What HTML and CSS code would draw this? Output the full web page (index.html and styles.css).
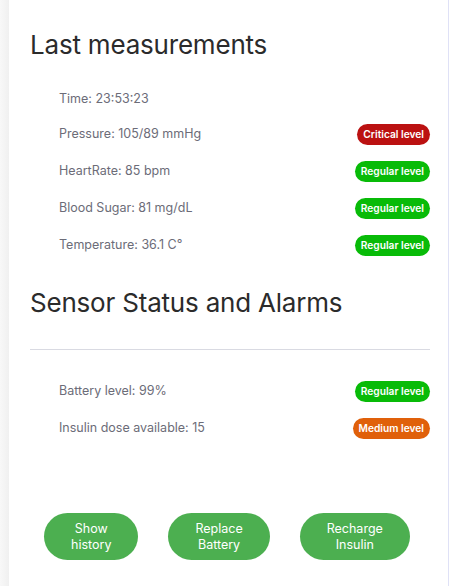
FILE: index.html
```html
<!DOCTYPE html>
<html>
<head>
<meta charset="utf-8">
<link rel="stylesheet" href="styles.css">
</head>
<body>
<div class="page">
  <div class="shade"></div>
  <main class="card">
    <h2 class="title">Last measurements</h2>
    <ul class="list">
      <li class="row row-plain"><span class="label">Time: 23:53:23</span></li>
      <li class="row"><span class="label">Pressure: 105/89 mmHg</span><span class="badge critical">Critical level</span></li>
      <li class="row"><span class="label">HeartRate: 85 bpm</span><span class="badge regular">Regular level</span></li>
      <li class="row"><span class="label">Blood Sugar: 81 mg/dL</span><span class="badge regular">Regular level</span></li>
      <li class="row"><span class="label">Temperature: 36.1 C°</span><span class="badge regular">Regular level</span></li>
    </ul>
    <h2 class="title title-2">Sensor Status and Alarms</h2>
    <hr class="divider">
    <ul class="list list-2">
      <li class="row"><span class="label">Battery level: 99%</span><span class="badge regular">Regular level</span></li>
      <li class="row"><span class="label">Insulin dose available: 15</span><span class="badge medium">Medium level</span></li>
    </ul>
    <div class="actions">
      <button class="btn">Show<br>history</button>
      <button class="btn">Replace<br>Battery</button>
      <button class="btn">Recharge<br>Insulin</button>
    </div>
  </main>
</div>
</body>
</html>
```
FILE: styles.css
```css
html, body {
  margin: 0;
  padding: 0;
  background: #ffffff;
}
body {
  font-family: "Inter", "Lato", sans-serif;
}
.page {
  display: flex;
  height: 586px;
  overflow: hidden;
}
.shade {
  width: 9px;
  flex: none;
  background: linear-gradient(to right, #f8f8f8, #f0f0f0);
}
.card {
  width: 400px;
  flex: none;
  padding: 29px 18px 0 21px;
  border-right: 1px solid #dfe1f6;
  background: #fff;
}
.title {
  margin: 0;
  font-weight: 400;
  font-size: 26px;
  line-height: 31px;
  color: #2b2b2b;
  letter-spacing: -0.2px;
}
.title-2 {
  margin-top: 31px;
}
.list {
  list-style: none;
  margin: 31px 0 0 0;
  padding: 0 0 0 29px;
  display: flex;
  flex-direction: column;
  gap: 16px;
}
.list-2 {
  margin-top: 31px;
}
.row {
  display: flex;
  justify-content: space-between;
  align-items: center;
  min-height: 21px;
}
.row-plain {
  min-height: 17px;
}
.label {
  font-size: 12.5px;
  line-height: 17px;
  color: #6c6c78;
  position: relative;
  top: -1px;
}
.badge {
  font-size: 10.2px;
  font-weight: 600;
  color: #fff;
  line-height: 21px;
  height: 21px;
  padding: 0 6px;
  border-radius: 11px;
}
.critical { background: #bb1111; }
.regular { background: #08bb08; }
.medium { background: #e0600a; }
.divider {
  border: 0;
  border-top: 1px solid #d9dae2;
  margin: 31px 0 0 0;
}
.actions {
  display: flex;
  gap: 30px;
  margin-top: 74px;
  padding-left: 14px;
}
.btn {
  font-family: "Inter", "Lato", sans-serif;
  font-size: 12.5px;
  line-height: 16px;
  color: #fff;
  background: #4caf50;
  border: 0;
  border-radius: 24px;
  height: 47px;
  padding: 0 27px;
}
```
